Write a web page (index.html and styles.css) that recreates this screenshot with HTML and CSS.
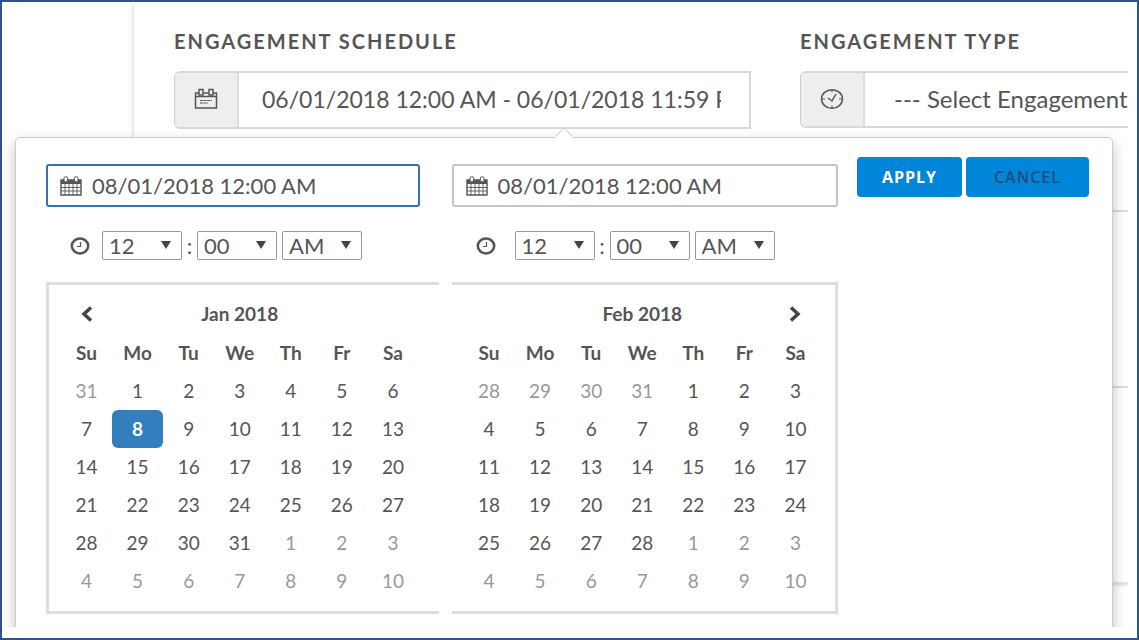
FILE: index.html
```html
<!DOCTYPE html>
<html lang="en">
<head>
<meta charset="utf-8">
<title>Engagement Schedule</title>
<link rel="stylesheet" href="styles.css">
</head>
<body>
<svg class="sprite" aria-hidden="true">
  <symbol id="calendar" viewBox="0 0 22 20">
    <path d="M1 4h20v15H1z" fill="#fff" stroke="currentColor" stroke-width="1.4"/>
    <path d="M1 4h20v4H1z" fill="currentColor"/>
    <path d="M1 11.5h20M1 15h20M5 8v11M9 8v11M13 8v11M17 8v11" stroke="currentColor" stroke-width=".9" fill="none"/>
    <rect x="4" y=".7" width="3.6" height="5" rx="1.5" fill="#fff" stroke="currentColor"/>
    <rect x="14.4" y=".7" width="3.6" height="5" rx="1.5" fill="#fff" stroke="currentColor"/>
  </symbol>
  <symbol id="clock" viewBox="0 0 20 18">
    <ellipse cx="10" cy="9" rx="8.2" ry="7.4" fill="none" stroke="currentColor" stroke-width="2.5"/>
    <path d="M10.5 5v4.5H7" fill="none" stroke="currentColor" stroke-width="1.2"/>
  </symbol>
</svg>
<div class="frame">
  <main class="viewport">
    <section class="card">
      <div class="fields">
        <div class="field">
          <label class="field-label" for="schedule">ENGAGEMENT SCHEDULE</label>
          <div class="group">
            <span class="addon">
              <svg width="24" height="22" viewBox="0 0 24 22" fill="none" stroke="currentColor" stroke-width="1.5">
                <path d="M5 5H1.5v15h21V5H19M9.500 5h5M1.500 8.500h21"/>
                <rect x="5" y="1.500" width="4" height="5.500"/><rect x="15" y="1.500" width="4" height="5.500"/>
                <path d="M6 12.500h12M6 15h8" stroke-width="1" stroke-dasharray="3 .6"/>
              </svg>
            </span>
            <input class="control" id="schedule" type="text" value="06/01/2018 12:00 AM - 06/01/2018 11:59 PM">
          </div>
        </div>
        <div class="field">
          <label class="field-label" for="type">ENGAGEMENT TYPE</label>
          <div class="group group-open">
            <span class="addon">
              <svg width="24" height="22" viewBox="0 0 24 22" fill="none" stroke="currentColor">
                <ellipse cx="12" cy="11" rx="10.500" ry="9.300" stroke-width="1.500"/>
                <path d="M8 10l4 3 4-7" stroke-width="1.500"/>
                <path d="M12 2v2.500M12 17.500V20M2 11h3M19 11h3"/>
              </svg>
            </span>
            <select class="control control-select" id="type"><option>--- Select Engagement</option></select>
          </div>
        </div>
      </div>
      <div class="row row-first"></div>
      <div class="row row-second"></div>
      <div class="row row-last"></div>
    </section>

    <div class="picker" role="dialog" aria-label="Date range">
      <svg class="pointer" width="20" height="11" viewBox="0 0 20 11"><path d="M0 11L10 1l10 10" fill="#fff" stroke="#ccc"/></svg>
      <div class="side side-start">
        <div class="date date-active">
          <svg class="date-icon"><use href="#calendar"/></svg>
          <input type="text" aria-label="Start date" value="08/01/2018 12:00 AM">
        </div>
        <div class="time">
          <svg class="time-icon"><use href="#clock"/></svg>
          <span class="pick"><select aria-label="Start hour"><option>12</option></select></span>
          <span class="colon">:</span>
          <span class="pick"><select aria-label="Start minute"><option>00</option></select></span>
          <span class="pick pick-last"><select aria-label="Start period"><option>AM</option></select></span>
        </div>
        <div class="calendar">
          <table>
            <thead>
              <tr class="month"><th><button class="nav" type="button" aria-label="Previous month"><svg width="14" height="16" viewBox="0 0 14 16"><path d="M11 1.500L4 8l7 6.500"/></svg></button></th><th colspan="5">Jan 2018</th><th></th></tr>
              <tr><th>Su</th><th>Mo</th><th>Tu</th><th>We</th><th>Th</th><th>Fr</th><th>Sa</th></tr>
            </thead>
            <tbody>
              <tr><td class="off">31</td><td>1</td><td>2</td><td>3</td><td>4</td><td>5</td><td>6</td></tr>
              <tr><td>7</td><td class="active">8</td><td>9</td><td>10</td><td>11</td><td>12</td><td>13</td></tr>
              <tr><td>14</td><td>15</td><td>16</td><td>17</td><td>18</td><td>19</td><td>20</td></tr>
              <tr><td>21</td><td>22</td><td>23</td><td>24</td><td>25</td><td>26</td><td>27</td></tr>
              <tr><td>28</td><td>29</td><td>30</td><td>31</td><td class="off">1</td><td class="off">2</td><td class="off">3</td></tr>
              <tr class="off"><td>4</td><td>5</td><td>6</td><td>7</td><td>8</td><td>9</td><td>10</td></tr>
            </tbody>
          </table>
        </div>
      </div>
      <div class="side side-end">
        <div class="date">
          <svg class="date-icon"><use href="#calendar"/></svg>
          <input type="text" aria-label="End date" value="08/01/2018 12:00 AM">
        </div>
        <div class="time">
          <svg class="time-icon"><use href="#clock"/></svg>
          <span class="pick"><select aria-label="End hour"><option>12</option></select></span>
          <span class="colon">:</span>
          <span class="pick"><select aria-label="End minute"><option>00</option></select></span>
          <span class="pick pick-last"><select aria-label="End period"><option>AM</option></select></span>
        </div>
        <div class="calendar">
          <table>
            <thead>
              <tr class="month"><th></th><th colspan="5">Feb 2018</th><th><button class="nav" type="button" aria-label="Next month"><svg width="14" height="16" viewBox="0 0 14 16"><path d="M3 1.500L10 8l-7 6.500"/></svg></button></th></tr>
              <tr><th>Su</th><th>Mo</th><th>Tu</th><th>We</th><th>Th</th><th>Fr</th><th>Sa</th></tr>
            </thead>
            <tbody>
              <tr><td class="off">28</td><td class="off">29</td><td class="off">30</td><td class="off">31</td><td>1</td><td>2</td><td>3</td></tr>
              <tr><td>4</td><td>5</td><td>6</td><td>7</td><td>8</td><td>9</td><td>10</td></tr>
              <tr><td>11</td><td>12</td><td>13</td><td>14</td><td>15</td><td>16</td><td>17</td></tr>
              <tr><td>18</td><td>19</td><td>20</td><td>21</td><td>22</td><td>23</td><td>24</td></tr>
              <tr><td>25</td><td>26</td><td>27</td><td>28</td><td class="off">1</td><td class="off">2</td><td class="off">3</td></tr>
              <tr class="off"><td>4</td><td>5</td><td>6</td><td>7</td><td>8</td><td>9</td><td>10</td></tr>
            </tbody>
          </table>
        </div>
      </div>
      <div class="actions">
        <button class="btn" type="button">APPLY</button>
        <button class="btn btn-cancel" type="button">CANCEL</button>
      </div>
    </div>
  </main>
</div>
</body>
</html>
```
FILE: styles.css
```css
* { box-sizing: border-box; }
body { margin: 0; font-family: Lato, "Open Sans", sans-serif; color: #555; background: #fff; }
input, select, button { font: inherit; color: inherit; margin: 0; }
.sprite { display: none; }

.frame { height: 100vh; border: 2px solid #2f528f; padding: 2px 9px 11px 0; }
.viewport { position: relative; height: 100%; overflow: hidden; }

.card { margin-left: 132px; border-bottom: 2px solid #e4e4e4; padding-top: 23px; box-shadow: 0 0 4px rgba(0, 0, 0, .25); }
.fields { display: grid; grid-template-columns: minmax(0, 577fr) minmax(0, 328fr); gap: 49px; padding-left: 40px; }
.field-label { display: block; height: 44px; font-size: 20px; line-height: 28px; font-weight: 700; letter-spacing: 2px; white-space: nowrap; }
.group { display: flex; height: 58px; border: 2px solid #d8d8d8; border-left: 1px solid #ccc; border-radius: 6px 0 0 6px; }
.group-open { height: 57px; border-right: 0; }
.addon { flex: 0 0 64px; display: flex; align-items: center; justify-content: center; padding-bottom: 2px; background: #eee; border-right: 2px solid #ddd; border-radius: 5px 0 0 5px; }
.control { flex: 1; min-width: 0; width: 100%; border: 0; outline: 0; background: transparent; padding: 0 28px 2px 23px; font-size: 23px; }
.control-select { appearance: none; padding: 0 0 2px 29px; font-size: 24px; }
.row { border-bottom: 2px solid #ddd; }
.row-first { height: 83px; }
.row-second { height: 176px; }
.row-last { height: 194px; border: 0; }

.picker { position: absolute; top: 133px; left: 13px; right: 15px; min-height: 520px; display: grid; grid-template-columns: minmax(0, 392fr) minmax(0, 386fr) auto; gap: 13px; align-items: start; padding: 26px 23px 24px 30px; background: #fff; border: 1px solid #ccc; border-radius: 5px; box-shadow: 0 6px 14px rgba(0, 0, 0, .25); }
.pointer { position: absolute; top: -11px; left: 50%; margin-left: -10px; }

.date { display: flex; align-items: center; height: 43px; padding-left: 12px; gap: 10px; border: 2px solid #c4c4c4; border-radius: 3px; }
.date-active { margin-right: 19px; border-color: #3573ab; }
.date-icon { flex: none; width: 22px; height: 20px; }
.date input { flex: 1; min-width: 0; border: 0; outline: 0; padding: 0; background: none; font-size: 22px; }

.time { display: flex; align-items: center; height: 29px; margin: 24px 0 22px; padding-left: 24px; font-size: 22px; }
.time-icon { flex: none; width: 20px; height: 18px; margin-right: 12px; }
.side-end .time-icon { margin-right: 19px; }
.colon { flex: 0 0 15px; text-align: center; }
.pick { position: relative; flex: 0 0 80px; height: 29px; }
.pick-last { margin-left: 5px; }
.pick select { appearance: none; display: block; width: 100%; height: 100%; padding: 0 0 0 6px; border: 1px solid #999; border-radius: 2px; background: #fff; }
.pick::after { content: ""; position: absolute; top: 10px; right: 11px; border: 5px solid transparent; border-top: 8px solid #444; border-bottom: 0; pointer-events: none; }

.calendar { border: 3px solid #ddd; padding: 9px 14px 11px 12px; }
.side-start .calendar { border-right: 0; padding-right: 20px; }
.side-end .calendar { border-left: 0; }
.calendar table { width: 100%; table-layout: fixed; border-collapse: separate; border-spacing: 0; text-align: center; font-size: 19px; }
.calendar th, .calendar td { height: 38px; padding: 0; line-height: 24px; }
.calendar .month th { height: 40px; }
.calendar .off { color: #999; }
.calendar .active { background: #357ebd; color: #fff; border-radius: 6px; font-weight: 700; }
.nav { display: block; margin: 0 auto; padding: 0; border: 0; background: none; cursor: pointer; }
.nav svg { display: block; }
.nav path { fill: none; stroke: #444; stroke-width: 3.5; }

.actions { display: flex; gap: 4px; margin: -7px 0 0 6px; }
.btn { min-width: 105px; height: 40px; padding: 0 22px; border: 0; border-radius: 4px; background: #0085d8; color: #fff; font-family: "Open Sans", sans-serif; font-size: 16px; font-weight: 700; letter-spacing: 1px; }
.btn-cancel { min-width: 123px; color: #1f4f80; font-weight: 600; }
```
